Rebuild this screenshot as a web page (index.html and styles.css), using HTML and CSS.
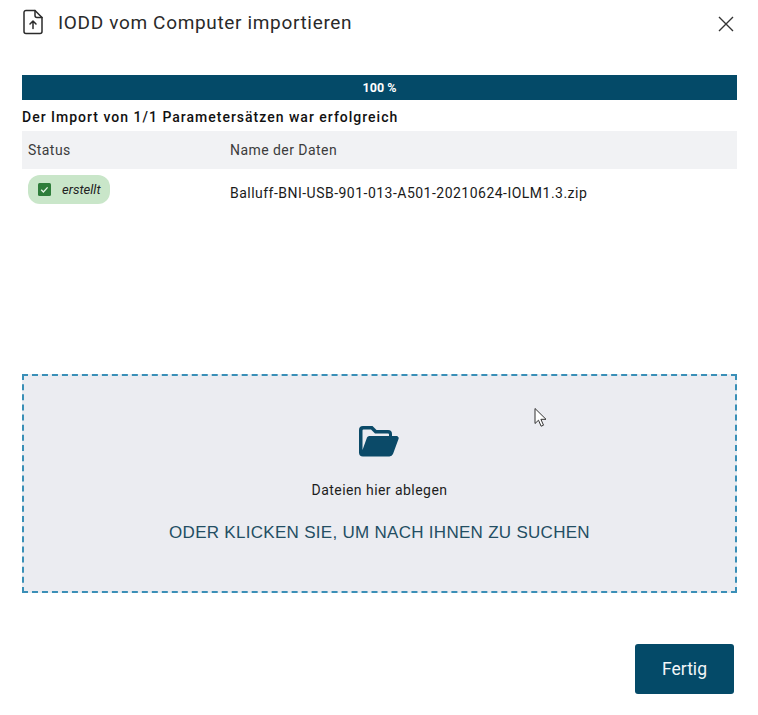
FILE: index.html
```html
<!DOCTYPE html>
<html lang="de">
<head>
<meta charset="utf-8">
<title>IODD vom Computer importieren</title>
<link rel="stylesheet" href="styles.css">
</head>
<body>
<div class="dialog">
  <header class="head">
    <svg class="file-icon" width="22" height="26" viewBox="0 0 22 26" fill="none" stroke="#2b2b2b" stroke-width="1.5" stroke-linejoin="round" stroke-linecap="round">
      <path d="M4 1.500h9l7 7v14a2 2 0 0 1-2 2H4a2 2 0 0 1-2-2v-19a2 2 0 0 1 2-2z"/>
      <path d="M13 1.500v5a2 2 0 0 0 2 2h5"/>
      <path d="M11 19.500v-7M8 15l3-3 3 3"/>
    </svg>
    <h1 class="title">IODD vom Computer importieren</h1>
    <svg class="close" width="16" height="16" viewBox="0 0 16 16" stroke="#333" stroke-width="1.4" fill="none"><path d="M1 1l14 14M15 1L1 15"/></svg>
  </header>
  <div class="progress">100 %</div>
  <p class="result">Der Import von 1/1 Parametersätzen war erfolgreich</p>
  <div class="table-head">
    <span class="col-status">Status</span>
    <span>Name der Daten</span>
  </div>
  <div class="table-row">
    <span class="col-status">
      <span class="chip">
        <svg width="13" height="13" viewBox="0 0 13 13"><rect width="13" height="13" rx="1.500" fill="#2e7d3a"/><path d="M3.200 6.800l2.200 2.200 4.200-4.600" fill="none" stroke="#e8f5e9" stroke-width="1.300"/></svg>
        <em>erstellt</em>
      </span>
    </span>
    <span class="file-name">Balluff-BNI-USB-901-013-A501-20210624-IOLM1.3.zip</span>
  </div>
  <div class="drop">
    <svg class="folder" width="40" height="31" viewBox="0 0 40 31">
      <path fill="#0b4a68" d="M4 0h9.500l4 4H29a4 4 0 0 1 4 4v2.500h-3V8.500a1 1 0 0 0-1-1H16l-4-4H4.500a1 1 0 0 0-1 1V24l4.500-12.500a2.500 2.500 0 0 1 2.300-1.500H37.500a2.200 2.200 0 0 1 2 3L34 28a4 4 0 0 1-3.600 2.500H4a4 4 0 0 1-4-4V4a4 4 0 0 1 4-4z"/>
    </svg>
    <div class="drop-text">Dateien hier ablegen</div>
    <div class="drop-link">ODER KLICKEN SIE, UM NACH IHNEN ZU SUCHEN</div>
    <svg class="cursor" width="13" height="21" viewBox="0 0 13 20"><path d="M1 1v15l3.500-3.300 2.600 6 2.400-1-2.600-5.900H12z" fill="#fff" stroke="#333" stroke-width="1"/></svg>
  </div>
  <footer class="foot">
    <button class="done" type="button">Fertig</button>
  </footer>
</div>
</body>
</html>
```
FILE: styles.css
```css
* { box-sizing: border-box; }
html, body { margin: 0; padding: 0; background: #fff; }
body { width: 758px; height: 715px; overflow: hidden; font-family: Roboto, "Liberation Sans", sans-serif; color: #1d1d1d; }
.dialog { padding: 0 21px 0 22px; display: flex; flex-direction: column; }
.head { height: 75px; display: flex; align-items: flex-start; padding-top: 9px; }
.file-icon { flex: none; margin-right: 14px; }
.title { margin: 2px 0 0; font-size: 19px; line-height: 24px; font-weight: 400; letter-spacing: 0.66px; color: #2a2a2a; flex: 1; }
.close { margin: 7px 3px 0 0; flex: none; }
.progress { height: 25px; background: #044a68; color: #fff; font-size: 12.500px; font-weight: 700; line-height: 25px; text-align: center; }
.result { margin: 0; height: 31px; font-size: 14px; font-weight: 500; line-height: 34px; letter-spacing: 1px; color: #111; }
.table-head { height: 38px; background: #f1f2f4; display: flex; align-items: center; font-size: 14px; letter-spacing: 0.45px; color: #3c3c3c; }
.col-status { width: 208px; padding-left: 6px; flex: none; }
.table-row { height: 205px; display: flex; align-items: flex-start; font-size: 14px; }
.chip { margin-top: 6px; width: 82px; height: 29px; border-radius: 12px; background: #c9e6c9; display: flex; align-items: center; padding-left: 10px; gap: 11px; font-size: 13px; color: #222; }
.file-name { margin-top: 16px; letter-spacing: 0.48px; color: #1a1a1a; }
.drop { position: relative; height: 219px; background: #ebecf1; border: 2px dashed #3a8fb7; display: flex; flex-direction: column; align-items: center; padding-top: 50px; }
.folder { display: block; margin-right: 2px; }
.drop-text { margin-top: 23px; font-size: 14px; line-height: 20px; letter-spacing: 0.45px; color: #1d1d1d; }
.drop-link { margin-top: 22px; font-family: "Liberation Sans", Arial, sans-serif; font-size: 17px; line-height: 22px; letter-spacing: 0.29px; color: #234e63; }
.cursor { position: absolute; left: 510px; top: 31px; }
.foot { display: flex; justify-content: flex-end; padding: 51px 3px 0 0; }
.done { width: 99px; height: 50px; background: #044a68; border: 0; border-radius: 3px; color: #f2f6f8; font-family: Roboto, "Liberation Sans", sans-serif; font-size: 17.500px; font-weight: 400; }
```
